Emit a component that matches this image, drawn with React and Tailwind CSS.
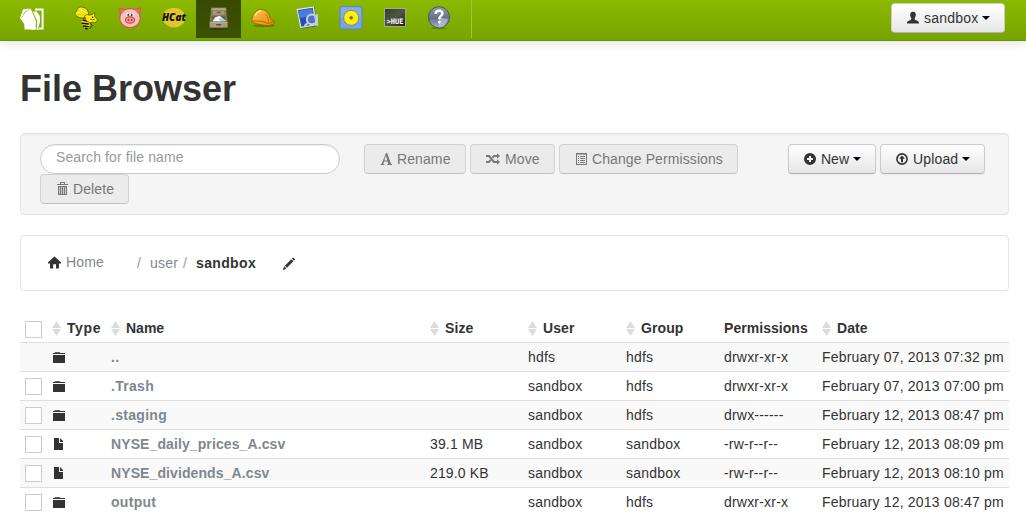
import React from "react";

/* ---------- navigation icons (24 x 24) ---------- */

const Nav = ({ children }) => (
  <svg width="24" height="24" viewBox="0 0 24 24" className="block overflow-visible">
    {children}
  </svg>
);

const Logo = () => (
  <Nav>
    <path d="M15 2.6H22.6V21.6H11" fill="none" stroke="#fff" strokeWidth="2" />
    <path d="M3.2 2.2 10.6 1.4 4.6 5 0.6 12.5 0 11Z" fill="#fff" />
    <path d="M10.8 1.8 12.6 5 16.2 14.5 15.6 22.4H4.6L4.2 17 0.8 12 5.2 5.4Z" fill="#fff" />
    <path d="M12.4 4.4 16.6 4.4 19.8 9 20 16 18.4 22.4H16.6L17 14Z" fill="#fff" />
    <path d="M12 3.6 16.6 14 16.2 22.4M18.4 22 20 16" fill="none" stroke="#82ad00" strokeWidth="0.8" />
  </Nav>
);

const Bee = () => (
  <Nav>
    <path d="M8.5 13 15 12.5 17 16 15 20.5 12.8 23.6 8.6 20 7.6 16Z" fill="#f5d60a" />
    <path d="M8.6 14 14 15.2M7.8 17.2 14.8 18M8.8 20 14.8 20.6M11 22.2 13.8 22.8" stroke="#111" strokeWidth="1.4" />
    <path d="M15 14.5 18 19.5 16 22.5" fill="none" stroke="#333" strokeWidth="1" />
    <path d="M10.5 11.5C6.5 12.5 1.2 10.5 1 7.8.6 6.5 2.6 6 3 4 4 .8 7 .8 9 1.4 12.5 2 15 4.5 14.5 10Z" fill="#fbee13" stroke="#3d3a00" strokeWidth="0.6" />
    <path d="M3 5C6 4 9 5 11.5 8M2.5 9C6 8 9 9 11 10M8 2.8 12.6 6.5" fill="none" stroke="#b3a700" strokeWidth="0.6" />
    <path d="M5 5.2C7.5 4 10 5 12 6.5" fill="none" stroke="#fffcae" strokeWidth="0.9" />
    <path d="M10.5 11C11 8.5 13.5 8 15.5 9.2L18.4 8.4 20.6 6.6 20.8 10.5 23.4 13.8 22.2 16.4 18.5 16.2 16 17 12.5 15Z" fill="#ffe713" stroke="#3d3a00" strokeWidth="0.6" />
    <path d="M16 13.2 18.5 13.8 21 13.2M9 12.5 12 12" fill="none" stroke="#4d4600" strokeWidth="0.7" />
    <circle cx="18.8" cy="11.2" r="0.7" fill="#111" />
  </Nav>
);

const Pig = () => (
  <Nav>
    <path d="M1.8 2.2 6.8 3.7C10 2.5 14 2.5 17.2 3.7L22.2 2.2 21.6 8.8C24 16 18.5 21.5 12 21.5S0 16 2.4 8.8Z" fill="#f6c2bc" stroke="#d4564a" strokeWidth="1.2" />
    <path d="M2 2.5 6.6 4.4 3.2 8.2ZM22 2.5 17.4 4.4 20.8 8.2Z" fill="#e4766a" stroke="#d4564a" strokeWidth="0.5" />
    <ellipse cx="12" cy="14" rx="4.6" ry="3.1" fill="#f29b91" stroke="#cf4a3e" strokeWidth="1.1" />
    <ellipse cx="10.5" cy="14" rx="0.8" ry="1.3" fill="#b93c32" />
    <ellipse cx="13.6" cy="14" rx="0.8" ry="1.3" fill="#b93c32" />
    <ellipse cx="9.8" cy="8.7" rx="1.4" ry="1.9" fill="#fff" />
    <ellipse cx="14.2" cy="8.7" rx="1.4" ry="1.9" fill="#fff" />
    <ellipse cx="10.2" cy="8.9" rx="0.8" ry="1.5" fill="#333" />
    <ellipse cx="13.8" cy="8.9" rx="0.8" ry="1.5" fill="#333" />
  </Nav>
);

const HCat = () => (
  <Nav>
    <ellipse cx="12" cy="11.6" rx="11.4" ry="9.9" fill="#e3c62b" />
    <text x="0" y="14.6" textLength="24" lengthAdjust="spacingAndGlyphs" className="font-['Open_Sans',sans-serif] text-[10.5px] font-extrabold italic" fill="#111">HCat</text>
  </Nav>
);

const Cabinet = () => (
  <Nav>
    <ellipse cx="11.8" cy="22.4" rx="9.5" ry="1.2" fill="#000" opacity="0.5" />
    <path d="M4.2 1.6H19.2L20.2 14V22H3V14Z" fill="#8a8160" stroke="#5e573c" strokeWidth="0.7" />
    <path d="M4.8 2.2H18.6L19 4.6H4.4Z" fill="#b3a987" />
    <rect x="5.6" y="4.4" width="12.2" height="4.6" fill="#a39974" stroke="#7b7352" strokeWidth="0.5" />
    <rect x="9.8" y="5.8" width="4" height="1.3" rx="0.5" fill="#655d40" />
    <rect x="4.8" y="10" width="13.8" height="6" fill="#6b6346" />
    <path d="M5 16.2 8 11.6 12.6 9.8 18.8 15V16.2Z" fill="#f7fafd" />
    <path d="M11.6 12.4 15 11.8 18.8 15V16.2H14Z" fill="#b2cbe9" />
    <path d="M2.6 15.8H20.8V21.8H2.6Z" fill="#a79d79" stroke="#665e3e" strokeWidth="0.7" />
    <path d="M3 16.4H20.4" stroke="#cbc19e" strokeWidth="0.7" />
    <rect x="9" y="17.9" width="5.4" height="1.5" rx="0.7" fill="#5c5438" />
  </Nav>
);

const Helmet = () => (
  <Nav>
    <defs>
      <linearGradient id="hat" x1="0" y1="0" x2="1" y2="1">
        <stop offset="0" stopColor="#ffc64a" />
        <stop offset="1" stopColor="#e38700" />
      </linearGradient>
    </defs>
    <ellipse cx="13" cy="19.6" rx="11" ry="1.6" fill="#000" opacity="0.25" />
    <path d="M.8 15.6C.8 10 4.5 3.8 9.5 3.4 15 3.2 18.4 8 19.6 13.4L23.6 15.4 23.4 17.8 18 19.6C12 19.4 5 18.2.8 15.6Z" fill="url(#hat)" stroke="#95600a" strokeWidth="0.8" />
    <path d="M1 15C7 14.6 13 15.2 16.8 17.4L23.2 16" fill="none" stroke="#a3610a" strokeWidth="0.8" />
    <path d="M14.5 8.5C16.5 10 17.5 13 17.6 15.8" fill="none" stroke="#b86f05" strokeWidth="0.9" />
    <path d="M4.2 10C5 7.2 7.2 5.2 10 5" fill="none" stroke="#ffe6a6" strokeWidth="1.3" />
  </Nav>
);

const Design = () => (
  <Nav>
    <path d="M3.2 3.5 19.6 1 22.2 20.2 6.4 22.8Z" fill="#1c2b50" opacity="0.45" />
    <path d="M1.6 3 18.8.4 21.6 19.2 5.4 22Z" fill="#e9eefa" />
    <path d="M2.8 4 17.8 1.7 20.4 18.2 6.3 20.7Z" fill="#2450b4" />
    <path d="M3.2 4.8 17.2 2.6 18.1 8.8 4.8 12.6Z" fill="#4a7bdc" />
    <circle cx="16.8" cy="13.4" r="4.9" fill="#7e99d4" fillOpacity="0.5" stroke="#c4cfe6" strokeWidth="2.1" />
    <path d="M21.8 8 22.2 20" stroke="#c4cfe6" strokeWidth="1.9" />
    <path d="M9.4 19.8 13.4 16.8" stroke="#c4cfe6" strokeWidth="2" />
  </Nav>
);

const Oozie = () => (
  <Nav>
    <rect x="1" y="0.6" width="22" height="22.4" rx="2.2" fill="#7aa3e2" stroke="#5686cc" strokeWidth="1" />
    <rect x="2" y="1.6" width="20" height="10" rx="1.5" fill="#8fb3ea" opacity="0.6" />
    <circle cx="12.2" cy="11.8" r="7.5" fill="#fff200" stroke="#7f8a70" strokeWidth="0.9" />
    <circle cx="12.2" cy="11.8" r="1.5" fill="#446fae" stroke="#948500" strokeWidth="0.7" />
  </Nav>
);

const Shell = () => (
  <Nav>
    <defs>
      <linearGradient id="screen" x1="0" y1="0" x2="1" y2="1">
        <stop offset="0" stopColor="#353d2c" />
        <stop offset="0.5" stopColor="#4e5745" />
        <stop offset="1" stopColor="#181d14" />
      </linearGradient>
    </defs>
    <rect x="1.5" y="2.5" width="21" height="18" fill="url(#screen)" stroke="#a3ab92" strokeWidth="1" />
    <text x="3.4" y="18.2" textLength="17" lengthAdjust="spacingAndGlyphs" className="font-['DejaVu_Sans_Mono',monospace] text-[7.5px] font-bold" fill="#fff">&gt;HUE</text>
  </Nav>
);

const Help = () => (
  <Nav>
    <defs>
      <linearGradient id="ball" x1="0" y1="0" x2="0" y2="1">
        <stop offset="0" stopColor="#929daf" />
        <stop offset="0.55" stopColor="#667187" />
        <stop offset="1" stopColor="#aab6c9" />
      </linearGradient>
    </defs>
    <ellipse cx="12" cy="22.2" rx="8" ry="1" fill="#000" opacity="0.2" />
    <circle cx="12" cy="11.3" r="10.6" fill="url(#ball)" stroke="#4b576c" strokeWidth="1" />
    <path d="M12 11.5 21.5 13 16 20.7 12 21.5Z" fill="#c3cddd" opacity="0.6" />
    <path d="M8.5 7.8C8.9 3.6 15.8 3.8 15.4 7.6 15.1 9.9 12.2 10.2 12.2 13.2" fill="none" stroke="#fff" strokeWidth="2.4" />
    <rect x="10.9" y="14.8" width="2.6" height="2.6" rx="0.8" fill="#fff" />
  </Nav>
);

/* ---------- 14px glyphs ---------- */

const Glyph = ({ children }) => (
  <svg width="14" height="14" viewBox="0 0 14 14" fill="currentColor" className="block shrink-0">
    {children}
  </svg>
);
const UserGlyph = () => (
  <Glyph>
    <path d="M7 .8C9.2.8 9.9 2.2 9.8 4 9.7 5.8 8.8 6.7 8.7 7.4 8.6 8.6 9.4 8.9 10.8 9.4 12.4 10 13 10.5 13 12.4H1C1 10.5 1.6 10 3.2 9.4 4.6 8.9 5.4 8.6 5.3 7.4 5.2 6.7 4.3 5.8 4.2 4 4.1 2.2 4.8.8 7 .8Z" />
  </Glyph>
);
const FontGlyph = () => (
  <Glyph>
    <path fillRule="evenodd" d="M6 1H7.2L10.7 11.1Q11 12 12 12.2V13H7.1V12.2H8.3L7.6 9.4H4.1L3.3 12.2H4.6V13H.6V12.2Q1.6 12 2 11ZM5.8 3.6 4.3 8.5H7.3Z" />
  </Glyph>
);
const ShuffleGlyph = () => (
  <Glyph>
    <path d="M0 4H3L8 10H11M0 10H3L4.6 8.2M6.6 5.8 8 4H11" fill="none" stroke="currentColor" strokeWidth="2" />
    <path d="M11 1.2 14 4 11 6.8ZM11 7.2 14 10 11 12.8Z" />
  </Glyph>
);
const ListGlyph = () => (
  <Glyph>
    <path fillRule="evenodd" d="M1 1H12V13H1ZM2 2.5V12H11V2.5ZM3 4H4V5H3ZM5 4H10V5H5ZM3 6H4V7H3ZM5 6H10V7H5ZM3 8H4V9H3ZM5 8H10V9H5ZM3 10H4V11H3ZM5 10H10V11H5Z" />
  </Glyph>
);
const TrashGlyph = () => (
  <Glyph>
    <path fillRule="evenodd" d="M4 0H9V2H12V3H1V2H4ZM5 1V2H8V1ZM2 4H11V13H2ZM3.2 5V12H3.9V5ZM5.2 5V12H5.9V5ZM7.2 5V12H7.9V5ZM9.2 5V12H9.9V5Z" />
  </Glyph>
);
const PlusGlyph = () => (
  <Glyph>
    <path fillRule="evenodd" d="M7 1A6 6 0 1 1 7 13 6 6 0 0 1 7 1ZM6 4V6H4V8H6V10H8V8H10V6H8V4Z" />
  </Glyph>
);
const UploadGlyph = () => (
  <Glyph>
    <circle cx="7" cy="7" r="5.1" fill="none" stroke="currentColor" strokeWidth="1.6" />
    <path d="M7 3.5 10 6.8H8V10.3H6V6.8H4Z" />
  </Glyph>
);
const HomeGlyph = () => (
  <Glyph>
    <path d="M6.5.4 13 6.2V7.4H11V12.6H8V8.2H5.2V12.6H2V7.4H0V6.2Z" />
  </Glyph>
);
const PencilGlyph = () => (
  <Glyph>
    <path d="M9.9 1.6 11.2.4 13.2 2.4 12 3.7ZM9.3 2.2 11.4 4.3 5 10.8 2.9 8.7ZM2.3 9.3 4.4 11.4 1.6 12.9 .9 12.2Z" />
  </Glyph>
);
const FolderGlyph = () => (
  <Glyph>
    <path d="M3 1.2H7.6L8.3 2H13V3H1V2H2.4ZM1 4H13V12H1Z" />
  </Glyph>
);
const FileGlyph = () => (
  <Glyph>
    <path d="M2 0H7V5H11V12H2ZM8 0 11 3V4H8Z" />
  </Glyph>
);
const Caret = () => (
  <svg width="8" height="4" viewBox="0 0 8 4" className="block">
    <path d="M0 0H8L4 4Z" fill="#000" />
  </svg>
);
const Sort = () => (
  <svg width="9" height="15" viewBox="0 0 9 15" className="block shrink-0" fill="#dcdcdc">
    <path d="M4.5 0 9 7H0ZM0 8H9L4.5 15Z" />
  </svg>
);

/* ---------- pieces ---------- */

const Button = ({ icon, label, caret, disabled, width, gap = "ml-[4px]", track = "" }) => (
  <button
    className={
      "flex h-[30px] shrink-0 items-center rounded-[4px] border text-[14px] leading-5 " +
      (disabled
        ? "border-[#d2d2d2] border-b-[#c1c1c1] bg-[#ebebeb] pl-[15px] text-[#777] "
        : "border-[#ccc] border-b-[#b3b3b3] bg-linear-to-b from-white to-[#e6e6e6] pl-[14px] text-[#333] shadow-[0_1px_2px_rgba(0,0,0,0.05)] ") +
      width
    }
  >
    {icon}
    <span className={"whitespace-nowrap " + gap + " " + track}>{label}</span>
    {caret && <span className="ml-[4px]"><Caret /></span>}
  </button>
);

const Check = () => <span className="block size-[17px] border border-[#ccc] bg-white" />;

const grid = "grid grid-cols-[32px_59px_319px_98px_98px_98px_98px_1fr] ";

const Th = ({ label, plain, track = "tracking-[0.1px]" }) => (
  <div className={"flex items-center gap-[6px] self-start pt-[5px] " + track}>
    {!plain && <Sort />}
    <span>{label}</span>
  </div>
);

const files = [
  { up: true, dir: true, name: "..", size: "", user: "hdfs", group: "hdfs", perm: "drwxr-xr-x", date: "February 07, 2013 07:32 pm" },
  { dir: true, name: ".Trash", size: "", user: "sandbox", group: "hdfs", perm: "drwxr-xr-x", date: "February 07, 2013 07:00 pm" },
  { dir: true, name: ".staging", size: "", user: "sandbox", group: "hdfs", perm: "drwx------", date: "February 12, 2013 08:47 pm" },
  { dir: false, name: "NYSE_daily_prices_A.csv", size: "39.1 MB", user: "sandbox", group: "sandbox", perm: "-rw-r--r--", date: "February 12, 2013 08:09 pm" },
  { dir: false, name: "NYSE_dividends_A.csv", size: "219.0 KB", user: "sandbox", group: "sandbox", perm: "-rw-r--r--", date: "February 12, 2013 08:10 pm" },
  { dir: true, name: "output", size: "", user: "sandbox", group: "hdfs", perm: "drwxr-xr-x", date: "February 12, 2013 08:47 pm" },
];

const apps = [Bee, Pig, HCat, Cabinet, Helmet, Design, Oozie, Shell, Help];

export default function App() {
  return (
    <div className="h-[532px] w-[1026px] overflow-hidden bg-white font-['Liberation_Sans',Arial,sans-serif] text-[14px] leading-5 text-[#333]">
      <header className="flex h-[41px] items-start border-b border-[#689500] bg-linear-to-b from-[#8cb900] to-[#76a400] shadow-[0_1px_10px_rgba(0,0,0,0.15)]">
        <div className="flex h-[38px] w-[64px] items-center pl-[20px]">
          <Logo />
        </div>
        <nav className="flex h-[38px] w-[408px] border-r border-[#a1c735]">
          {apps.map((Icon, i) => (
            <a
              key={i}
              className={
                "flex h-[38px] items-center justify-center pb-[2px] " +
                (i === 3 ? "w-[45px] bg-linear-to-b from-[#384a00] to-[#3b5300]" : "w-[44px]")
              }
            >
              <Icon />
            </a>
          ))}
        </nav>
        <button className="mt-[3px] ml-auto mr-[21px] flex h-[30px] w-[114px] items-center rounded-[4px] border border-[#ccc] border-b-[#b3b3b3] bg-linear-to-b from-white to-[#e6e6e6] pl-[14px]">
          <UserGlyph />
          <span className="ml-[4px] tracking-[0.2px]">sandbox</span>
          <span className="ml-[4px]"><Caret /></span>
        </button>
      </header>

      <main className="pl-[20px]">
        <h1 className="mt-[28px] h-10 text-[36px] font-bold leading-10">File Browser</h1>

        <section className="mt-[24px] h-[82px] w-[989px] rounded-[4px] border border-[#e3e3e3] bg-[#f5f5f5] px-[19px] pt-[10px] shadow-[inset_0_1px_1px_rgba(0,0,0,0.05)]">
          <div className="flex">
            <input
              className="h-[30px] w-[300px] rounded-[15px] border border-[#ccc] bg-white px-[15px] pb-[4px] text-[14px] tracking-[0.12px] shadow-[inset_0_1px_1px_rgba(0,0,0,0.075)] placeholder:text-[#999]"
              placeholder="Search for file name"
            />
            <div className="ml-[24px] flex gap-[4px]">
              <Button disabled icon={<FontGlyph />} label="Rename" width="w-[102px]" gap="ml-[3px]" track="tracking-[0.1px]" />
              <Button disabled icon={<ShuffleGlyph />} label="Move" width="w-[85px]" gap="ml-[5px]" track="tracking-[0.1px]" />
              <Button disabled icon={<ListGlyph />} label="Change Permissions" width="w-[179px]" gap="ml-[3px]" track="tracking-[0.1px]" />
            </div>
            <div className="ml-[50px] flex gap-[4px]">
              <Button icon={<PlusGlyph />} label="New" caret width="w-[88px]" />
              <Button icon={<UploadGlyph />} label="Upload" caret width="w-[105px]" track="tracking-[0.15px]" />
            </div>
          </div>
          <Button disabled icon={<TrashGlyph />} label="Delete" width="w-[89px]" gap="ml-[3px]" track="tracking-[0.1px]" />
        </section>

        <section className="mt-[20px] flex h-[56px] w-[989px] items-start rounded-[4px] border border-[#e3e3e3] pl-[27px] pt-[16px]">
          <span className="mt-[4px]"><HomeGlyph /></span>
          <span className="ml-[4px] w-[71px] tracking-[0.15px] text-[#7f888d]">Home</span>
          <span className="mt-px w-[13px] text-[#999]">/</span>
          <span className="mt-px w-[33px] tracking-[0.2px] text-[#7f888d]">user</span>
          <span className="mt-px w-[13px] text-[#999]">/</span>
          <span className="mt-px w-[86px] font-bold tracking-[0.35px]">sandbox</span>
          <span className="mt-[5px]"><PencilGlyph /></span>
        </section>

        <section className="mt-[22px] w-[989px]">
          <div className={grid + "h-[29px] font-bold"}>
            <div className="pt-[8px] pl-[5px]"><Check /></div>
            <Th label="Type" track="tracking-[0.6px]" />
            <Th label="Name" track="tracking-[0px]" />
            <Th label="Size" />
            <Th label="User" />
            <Th label="Group" />
            <Th label="Permissions" plain track="tracking-[0.05px]" />
            <Th label="Date" />
          </div>
          {files.map((f, i) => (
            <div key={f.name} className={grid + "h-[29px] border-t border-[#ddd] " + (i % 2 === 0 ? "bg-[#f9f9f9]" : "bg-white")}>
              <div className="pt-[6px] pl-[5px]">{!f.up && <Check />}</div>
              <div className="pt-[8px]">{f.dir ? <FolderGlyph /> : <FileGlyph />}</div>
              <div className={"pt-[4px] font-bold text-[#7f888d] " + (f.dir ? "tracking-[0.3px]" : "tracking-[0.1px]")}>{f.name}</div>
              <div className="pt-[4px] tracking-[0.15px]">{f.size}</div>
              <div className="pt-[4px] tracking-[0.2px]">{f.user}</div>
              <div className="pt-[4px] tracking-[0.2px]">{f.group}</div>
              <div className="pt-[4px] tracking-[0.2px]">{f.perm}</div>
              <div className="whitespace-nowrap pt-[4px] tracking-[0.2px]">{f.date}</div>
            </div>
          ))}
        </section>
      </main>
    </div>
  );
}
